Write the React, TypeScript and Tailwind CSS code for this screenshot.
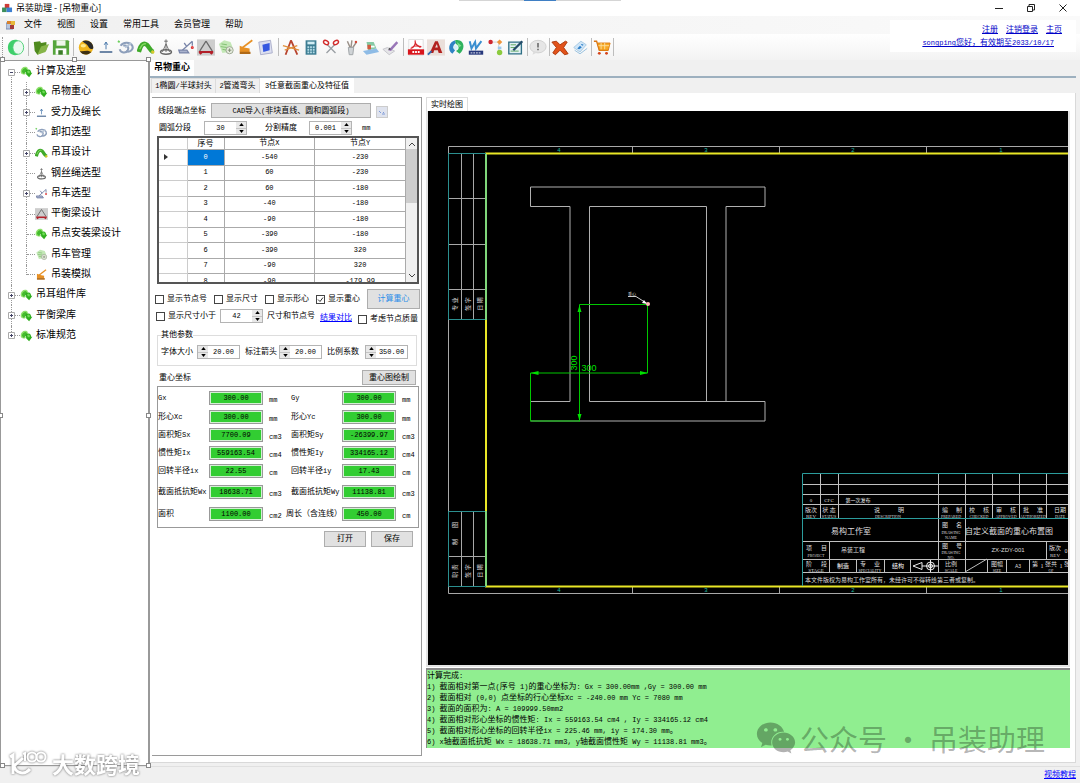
import { ReactNode, useState } from "react";
import { FaWeixin } from "react-icons/fa";

type IconName = keyof typeof icons;

const leaf = (
  <g>
    <path d="M1 9c0-5 3-8 7-8 2 0 4 1 4 3v5H8v4C4 13 1 12 1 9z" fill="#8fe06c" />
    <path d="M3 9c0-4 3-6 6-6l2 2-5 7z" fill="#45bb2e" />
    <path d="M8 9c0-3 2-4 5-4s4 2 4 5h2l-5 7-6-6h2z" fill="#2fae1e" />
    <path d="M11 8c1-2 3-2 4 0v3h-3z" fill="#6fdc55" />
  </g>
);

const icons = {
  ring: (
    <g>
      <path d="M12 1C6-1 1 3 1 9s5 10 11 8z" fill="#3fcf6b" />
      <ellipse cx="12.500" cy="9" rx="6" ry="7.500" fill="#e9faef" stroke="#49cf73" />
    </g>
  ),
  folder: (
    <g>
      <path d="M2 3l7-1 1 2 6-1v9L6 17 3 13z" fill="#4f8a1e" />
      <path d="M6 17l4-9 9-3-4 9z" fill="#86b548" />
    </g>
  ),
  save: (
    <g>
      <path d="M1 1h17l1 1v15H1z" fill="#56a63c" />
      <path d="M5 1h10v6H5z" fill="#eef7ea" />
      <path d="M4 10h12v7H4z" fill="#fff" />
      <path d="M7 12h5v5H7z" fill="#3b7d28" />
    </g>
  ),
  ball: (
    <g>
      <circle cx="10" cy="9" r="8" fill="#f0b51c" />
      <path d="M6 2c6-3 13 2 12 8-3 2-5-1-6-3S8 4 6 2z" fill="#2a2a2a" />
      <path d="M3 13c4 1 7-1 10 0 2 1 3 1 3 1-4 4-10 4-13-1z" fill="#3d2f12" />
      <ellipse cx="7" cy="7" rx="3" ry="2" fill="#ffe98a" />
    </g>
  ),
  force: (
    <g stroke="#6d86a6" fill="none">
      <path d="M10 3v8M8 6l2-3 2 3" stroke="#3b6ea5" />
      <path d="M3 14h14" strokeWidth="2.2" />
    </g>
  ),
  shackle: (
    <g fill="none" stroke="#8d9fbb" strokeWidth="2.2">
      <path d="M4 7c3-5 11-4 13 0s-3 8-7 6" />
      <path d="M3 11c1 4 7 5 9 1s-2-6-5-5" />
      <path d="M9 9l7-5" stroke="#b4c3d6" />
      <path d="M1 2l2 1" stroke="#6ccf5b" />
    </g>
  ),
  lug: (
    <g fill="none">
      <path d="M2 14C4 6 7 3 11 6c3 3 3 6 7 8" stroke="#3faa2a" strokeWidth="5" />
      <path d="M3 11C5 6 7 4 10 5" stroke="#86da63" strokeWidth="1.500" />
      <path d="M16 13l3 2" stroke="#d7c92c" strokeWidth="3" />
    </g>
  ),
  rope: (
    <g fill="none" stroke="#666">
      <path d="M10 0v5M8 2h4M10 5L6 14M10 5l4 9M10 5v9" />
      <ellipse cx="10" cy="14" rx="6" ry="2.500" strokeWidth="1.800" />
    </g>
  ),
  crane: (
    <g fill="none" stroke="#7884a8" strokeWidth="1.400">
      <path d="M6 12L17 2M11 8l-3-4M17 2v5" />
      <path d="M2 12h9l2 3H3z" fill="#a9b2cd" />
      <circle cx="17" cy="9" r="1" stroke="#d33" />
    </g>
  ),
  beam: (
    <g>
      <path d="M0 0h20v18H0z" fill="#cdcdcd" />
      <path d="M10 2L3 13M10 2l7 11" stroke="#6a6a6a" fill="none" strokeWidth="1.400" />
      <path d="M2 13h16v2l-2 2-2-2H6l-2 2-2-2z" fill="#b3202a" />
    </g>
  ),
  manage: (
    <g>
      <path d="M2 5l6-4 7 2 2 5-4 6-7 1z" fill="#c3e8b6" />
      <path d="M5 5l6 1M4 8l7 1M6 11l5 1" stroke="#7dbb6c" />
      <circle cx="14" cy="12" r="4" fill="#e7ecdf" stroke="#98a58e" />
      <path d="M12 12h4M14 10v4" stroke="#7a8a6e" />
    </g>
  ),
  excavator: (
    <g>
      <path d="M5 10L17 1" stroke="#e79024" strokeWidth="2" />
      <path d="M3 7l5 2 6 1v4H3z" fill="#e79024" />
      <path d="M3 15h12" stroke="#b06a18" strokeWidth="2.500" />
    </g>
  ),
  screen: (
    <g>
      <path d="M2 3l13-2 2 14-13 2z" fill="#dcdff0" stroke="#a8abc8" />
      <path d="M6 6l8-2v8l-7 2z" fill="#3557e0" />
    </g>
  ),
  compass: (
    <g fill="none" strokeWidth="2">
      <path d="M10 1L4 17M10 1l7 16" stroke="#b8442f" />
      <path d="M1 7l18 5M3 12l14-5" stroke="#e0903c" strokeWidth="1.500" />
    </g>
  ),
  calculator: (
    <g>
      <path d="M4 1h12v16H4z" fill="#3d7d93" />
      <path d="M6 2.500h8v3H6z" fill="#d2edf4" />
      <path d="M6 8.500h8M6 11.500h8M6 14.500h8" stroke="#b3dbe6" strokeDasharray="2 1" strokeWidth="2" />
    </g>
  ),
  scissors: (
    <g fill="none">
      <path d="M6 6l9 9M14 6l-9 9" stroke="#9a9fa4" strokeWidth="1.500" />
      <ellipse cx="4.500" cy="3.500" rx="3" ry="2" stroke="#d22b2b" strokeWidth="1.600" transform="rotate(30 4.500 3.500)" />
      <ellipse cx="15.500" cy="3.500" rx="3" ry="2" stroke="#d22b2b" strokeWidth="1.600" transform="rotate(-30 15.500 3.500)" />
    </g>
  ),
  brushes: (
    <g>
      <path d="M6 2l3 7M11 1l-1 8M16 3l-4 6" stroke="#9a9088" strokeWidth="1.600" />
      <path d="M7 9h6l-1 8H8z" fill="#d0d4d7" stroke="#9b9fa3" />
      <circle cx="15.500" cy="3" r="1.400" fill="#d24a3b" />
    </g>
  ),
  report: (
    <g>
      <path d="M5 3h8l3 7-9 2z" fill="#86c9a4" />
      <path d="M1 13l15-3 3 4-14 3z" fill="#8fbce6" />
      <path d="M6 6h4v5H6z" fill="#d35b3f" />
      <path d="M10 7h4v2h-4z" fill="#fff" />
    </g>
  ),
  pen: (
    <g>
      <path d="M1 11l5-2 8 4-6 4z" fill="#e5e5e8" stroke="#c3c3c8" />
      <path d="M7 12l9-10 2 2-8 9z" fill="#9a77b8" />
      <path d="M7 12l1-3 2 2z" fill="#555" />
    </g>
  ),
  pdf: (
    <g>
      <path d="M2 0h16v18H2z" fill="#fff" stroke="#ddd" />
      <path d="M9 1c1 4-1 8-5 9M9 2c0 4 4 6 7 6M5 9c3-2 7-2 10 0" stroke="#d8252b" fill="none" strokeWidth="1.300" />
      <path d="M1 11h18v6H1z" fill="#d8151c" />
      <path d="M6 14h8" stroke="#fff" strokeDasharray="2 1" strokeWidth="2" />
    </g>
  ),
  autocad: (
    <g>
      <path d="M0 0h20v18H0z" fill="#eadfda" />
      <path d="M3 15L9 2h3l5 13h-4l-1-3H8l-1 3zM9 9h3l-1-4z" fill="#b3211e" fillRule="evenodd" />
      <path d="M1 17l4-4" stroke="#2c6bb3" strokeWidth="2" />
    </g>
  ),
  globe: (
    <g>
      <path d="M9 1C2 3 0 12 6 16l3-4c-3-3-2-6 1-8z" fill="#2f83c4" />
      <path d="M9 1c9-2 13 8 5 15l-4-3c4-2 4-6 0-8z" fill="#2fb25e" />
      <path d="M11 3l5 4-3 2z" fill="#7ee08e" />
      <circle cx="9.500" cy="9" r="2.500" fill="#d8f0f6" />
    </g>
  ),
  word: (
    <g>
      <path d="M3 2l2 8 4-7 1 7 6-8" fill="none" stroke="#3a8fd0" strokeWidth="2.200" />
      <path d="M2 12.500h16v4.500H2z" fill="#27387c" />
      <path d="M4 15h12" stroke="#fff" strokeDasharray="2 1" />
    </g>
  ),
  nodes: (
    <g>
      <path d="M5 3h10M13 3v11" stroke="#ccc" />
      <circle cx="4" cy="3" r="2.500" fill="#cf2630" />
      <path d="M14 0l3 3-3 3-3-3z" fill="#f0963c" />
      <path d="M12 8h4v3h-4z" fill="#9ac9ef" />
      <circle cx="14" cy="14.500" r="3" fill="#8ccb3f" />
    </g>
  ),
  edit: (
    <g>
      <path d="M2 3h14v13H2z" fill="#e2f1f4" stroke="#2f6f86" strokeWidth="1.500" />
      <path d="M4 6h6M4 9h5M4 13h9" stroke="#58a55a" />
      <path d="M7 12l10-10" stroke="#244b68" strokeWidth="2.500" />
    </g>
  ),
  notice: (
    <g>
      <ellipse cx="10" cy="8" rx="9" ry="7" fill="#e6e6e6" stroke="#cfcfcf" />
      <path d="M5 13l-1 4 6-3z" fill="#dcdcdc" />
      <path d="M10 4v5M10 10.500v1.500" stroke="#555" strokeWidth="1.500" />
    </g>
  ),
  close: (
    <path d="M1 3l5-1 4 4 6-4 2 1-4 6 5 7-4 1-5-5-5 5-3-2 4-6z" fill="#e2531b" stroke="#a83709" />
  ),
  cards: (
    <g>
      <path d="M3 9l8-7 6 4-7 8z" fill="#cfe5f7" stroke="#a5c8e2" />
      <path d="M4 12l6 4 8-6" fill="none" stroke="#8dbbdd" />
      <path d="M7 10l3-3 2 2-3 2zM12 5l2 1-1 1-2-1z" fill="#2d7fc8" />
    </g>
  ),
  cart: (
    <g>
      <path d="M1 2h3l3 10h10" fill="none" stroke="#d97514" strokeWidth="1.500" />
      <path d="M5 4h14l-2 8H7z" fill="#f7a823" stroke="#dc7c12" />
      <path d="M9 4v7M13 4v7M6 7h12" stroke="#fce0a0" />
      <circle cx="7" cy="15.500" r="1.600" fill="#d4421a" />
      <circle cx="15" cy="15.500" r="1.600" fill="#d4421a" />
    </g>
  ),
  leaf,
};

const Icon = ({ name, className }: { name: IconName; className: string }) => (
  <svg viewBox="0 0 20 18" className={className} aria-hidden="true">
    {icons[name]}
  </svg>
);

// Latin runs are set one size smaller so they keep half the width of a Han character.
const Mixed = ({ children }: { children: string }) => (
  <span className="whitespace-pre">
    {children.split(/([\x20-\x7e]+)/).map((part, i) =>
      i % 2 ? (
        <span key={i} className="text-[7px]">
          {part}
        </span>
      ) : (
        part
      )
    )}
  </span>
);

const menus = ["文件", "视图", "设置", "常用工具", "会员管理", "帮助"];

const tools: (IconName | "sep" | "thin")[] = [
  "ring", "sep", "folder", "save", "sep",
  "ball", "force", "shackle", "lug", "rope", "crane", "beam", "manage", "excavator", "screen", "sep",
  "compass", "calculator", "scissors", "brushes", "report", "pen", "sep",
  "pdf", "autocad", "globe", "word", "nodes", "edit", "thin",
  "notice", "thin", "close", "cards", "thin", "cart", "thin",
];

type TreeItem = { label: string; icon: IconName; level: 0 | 1; box?: "+" | "-" };

const tree: TreeItem[] = [
  { label: "计算及选型", icon: "leaf", level: 0, box: "-" },
  { label: "吊物重心", icon: "leaf", level: 1, box: "+" },
  { label: "受力及绳长", icon: "force", level: 1, box: "+" },
  { label: "卸扣选型", icon: "shackle", level: 1 },
  { label: "吊耳设计", icon: "lug", level: 1, box: "+" },
  { label: "钢丝绳选型", icon: "rope", level: 1 },
  { label: "吊车选型", icon: "crane", level: 1, box: "+" },
  { label: "平衡梁设计", icon: "beam", level: 1 },
  { label: "吊点安装梁设计", icon: "leaf", level: 1 },
  { label: "吊车管理", icon: "manage", level: 1 },
  { label: "吊装模拟", icon: "excavator", level: 1 },
  { label: "吊耳组件库", icon: "leaf", level: 0, box: "+" },
  { label: "平衡梁库", icon: "leaf", level: 0, box: "+" },
  { label: "标准规范", icon: "leaf", level: 0, box: "+" },
];

const nodes = [
  ["0", "-540", "-230"],
  ["1", "60", "-230"],
  ["2", "60", "-180"],
  ["3", "-40", "-180"],
  ["4", "-90", "-180"],
  ["5", "-390", "-180"],
  ["6", "-390", "320"],
  ["7", "-90", "320"],
  ["8", "-90", "-179.99"],
];

const results = [
  ["Gx", "300.00", "mm", "Gy", "300.00", "mm"],
  ["形心Xc", "300.00", "mm", "形心Yc", "300.00", "mm"],
  ["面积矩Sx", "7700.09", "cm3", "面积矩Sy", "-26399.97", "cm3"],
  ["惯性矩Ix", "559163.54", "cm4", "惯性矩Iy", "334165.12", "cm4"],
  ["回转半径ix", "22.55", "cm", "回转半径iy", "17.43", "cm"],
  ["截面抵抗矩Wx", "18638.71", "cm3", "截面抵抗矩Wy", "11138.81", "cm3"],
  ["面积", "1100.00", "cm2", "周长（含连线）", "450.00", "cm"],
];

const log = [
  "计算完成:",
  "1) 截面相对第一点(序号 1)的重心坐标为: Gx = 300.00mm ,Gy = 300.00 mm",
  "2) 截面相对 (0,0) 点坐标的行心坐标Xc = -240.00 mm Yc = 7080 mm",
  "3) 截面的面积为: A = 109999.50mm2",
  "4) 截面相对形心坐标的惯性矩: Ix = 559163.54 cm4 , Iy = 334165.12 cm4",
  "5) 截面相对形心坐标的回转半径ix = 225.46 mm, iy = 174.30 mm。",
  "6) x轴截面抵抗矩 Wx = 18638.71 mm3, y轴截面惯性矩 Wy = 11138.81 mm3。",
];

const Button = ({ className, children }: { className: string; children: ReactNode }) => (
  <button
    type="button"
    className={`flex shrink-0 items-center justify-center whitespace-nowrap border border-[#adadad] bg-[#e1e1e1] ${className}`}
  >
    {children}
  </button>
);

const Spinner = ({ label, value, left }: { label: string; value: string; left?: boolean }) => (
  <div className={`flex h-[14px] w-[43px] shrink-0 border border-[#b4b4b4] bg-white ${left ? "flex-row-reverse" : ""}`}>
    <input
      aria-label={label}
      defaultValue={value}
      className="w-0 min-w-0 flex-1 bg-transparent text-center text-[7px] outline-none"
    />
    <div className="flex w-[10px] flex-col bg-[#e8e8e8]">
      <button type="button" aria-label={`${label}+`} className="flex flex-1 items-center justify-center">
        <svg viewBox="0 0 6 4" className="h-[3px] w-[5px]"><path d="M3 0l3 4H0z" /></svg>
      </button>
      <button type="button" aria-label={`${label}-`} className="flex flex-1 items-center justify-center border-t border-[#c4c4c4]">
        <svg viewBox="0 0 6 4" className="h-[3px] w-[5px]"><path d="M3 4l3-4H0z" /></svg>
      </button>
    </div>
  </div>
);

const Check = ({ label, checked }: { label: string; checked?: boolean }) => {
  const [on, setOn] = useState(!!checked);
  return (
    <label className="flex items-center gap-[3px] whitespace-nowrap">
      <span className="grid size-[9px]">
        <input
          type="checkbox"
          checked={on}
          onChange={() => setOn(!on)}
          className="col-start-1 row-start-1 size-[9px] appearance-none border border-[#444] bg-white"
        />
        {on && (
          <svg viewBox="0 0 9 9" className="pointer-events-none col-start-1 row-start-1 size-[9px]">
            <path d="M2 4.500l2 2 3-4" fill="none" stroke="#333" />
          </svg>
        )}
      </span>
      {label}
    </label>
  );
};

const TreeRow = ({ item, isLast }: { item: TreeItem; isLast: boolean }) => (
  <li className="relative flex items-center">
    <span className={`absolute left-[10px] border-l border-dotted border-[#999] ${item.box === "-" ? "top-1/2 h-1/2" : isLast ? "top-0 h-1/2" : "inset-y-0"}`} />
    {item.level === 1 && (
      <span className={`absolute left-[25px] top-0 border-l border-dotted border-[#999] ${item.icon === "excavator" ? "h-1/2" : "h-full"}`} />
    )}
    <span className={`relative flex h-[7px] shrink-0 items-center ${item.level ? "ml-[22px] w-[12px]" : "ml-[7px] w-[12px]"}`}>
      {item.box ? (
        <svg viewBox="0 0 7 7" className="size-[7px] shrink-0">
          <path d="M.5.5h6v6h-6z" fill="#fff" stroke="#aaa" />
          <path d={item.box === "+" ? "M2 3.500h3M3.500 2v3" : "M2 3.500h3"} stroke="#446" />
        </svg>
      ) : (
        <span className="w-1 shrink-0" />
      )}
      <span className="w-full border-t border-dotted border-[#999]" />
    </span>
    <Icon name={item.icon} className="h-[12px] w-[13px] shrink-0" />
    <a href="#" className="ml-[3px] whitespace-nowrap text-[10px] leading-4">
      {item.label}
    </a>
  </li>
);

const Handle = ({ className }: { className: string }) => (
  <span className={`absolute size-[5px] border border-[#888] bg-white ${className}`} />
);

const CadText = ({ x, y, size = 6, rotate, fill = "#ddd", children }: {
  x: number; y: number; size?: number; rotate?: boolean; fill?: string; children: string;
}) => (
  <text x={x} y={y} fontSize={size} fill={fill} textAnchor="middle" dominantBaseline="central"
    transform={rotate ? `rotate(-90 ${x} ${y})` : undefined}>
    {children}
  </text>
);

const zones: [number, string][] = [[559, "4"], [706, "3"], [853, "2"], [1001, "1"]];

const Drawing = () => (
  <svg
    viewBox="428 111 640 554"
    preserveAspectRatio="xMinYMin slice"
    className="h-[554px] w-full bg-black font-['Liberation_Serif','Noto_Sans_CJK_SC',serif]"
    role="img"
    aria-label="实时绘图"
    fill="none"
  >
    <g stroke="#a8a8a8">
      <path d="M1080 146.500H448.500v447H1080" />
      <path d="M632.500 146v7M779.500 146v7M926.500 146v7M632.500 587v6M779.500 587v6M926.500 587v6" />
      <path d="M461.500 154v166M473.500 154v166M448 198.500h38M448 244.500h38M448 289.500h38" />
      <path d="M461.500 511v75M473.500 511v75M448 556.500h38" />
    </g>
    <path d="M1080 153.500H486V586.500H1080" stroke="#e8e626" strokeWidth="2" />
    <path d="M486 153.500h-37.500v166H486M486 511.500h-37.500v75H486" stroke="#2b8f8f" />
    <path d="M486 154v166M486 511v75" stroke="#7fd67a" strokeWidth="2" />
    <g className="font-['Liberation_Sans',sans-serif]">
      {zones.map(([x, n]) => (
        <g key={n}>
          <CadText x={x} y={150} size={6} fill="#1fb8a0">{n}</CadText>
          <CadText x={x} y={590} size={6} fill="#1fb8a0">{n}</CadText>
        </g>
      ))}
    </g>

    <path
      d="M530.500 206.500v-19.500H765v19.500H726V401.500M530.500 206.500H570V401.500H530.500V421H765v-19.500H589.500v-195H706.500v195"
      stroke="#b0b0b0"
    />
    <path d="M648 304.500H579.500V421M647.500 304v69H530.500v48H580" stroke="#00c800" />
    <path d="M579.500 305l2 7h-4zM579.500 421l2-7h-4zM530.500 373l8-2v4zM648 373l-8-2v4z" fill="#00e000" />
    <g className="font-['Liberation_Sans',sans-serif]">
      <CadText x={589} y={368} size={9} fill="#00e000">300</CadText>
      <CadText x={574} y={363} size={9} rotate fill="#00e000">300</CadText>
    </g>
    <path d="M628 296.500h8l11 7" stroke="#ccc" />
    <CadText x={632} y={294} size={4}>重心</CadText>
    <path d="M647 304l-5-1 2-3z" fill="#fff" />
    <circle cx="648" cy="304" r="2" fill="#ffb8b8" />

    <CadText x={455} y={304} rotate>专 业</CadText>
    <CadText x={468} y={304} rotate>签 字</CadText>
    <CadText x={480} y={304} rotate>日 期</CadText>
    <CadText x={455} y={542} rotate>制</CadText>
    <CadText x={455} y={525} rotate>图</CadText>
    <CadText x={455} y={571} rotate>职 责</CadText>
    <CadText x={468} y={571} rotate>签 字</CadText>
    <CadText x={480} y={571} rotate>日 期</CadText>

    <g stroke="#c0c0c0">
      <path d="M802 484.500h278M802 494.500h278M802 504.500h278M802 541.500h278M802 559.500h278M802 572.500h278" />
      <path d="M820.500 473v45M838.500 473v45M938.500 473v99M965.500 473v99M992.500 473v45M1019.500 473v45M1046.500 473v45" />
      <path d="M829.500 541v31M856.500 559v13M884.500 559v13M910.500 559v13M987.500 559v13M1006.500 559v13M1029.500 559v13M1046.500 541v18M965 572l22-13" />
    </g>
    <g stroke="#eee">
      <path d="M913 566l9-3.500v7zM922 566h16M930.500 560v12" />
      <circle cx="930.500" cy="566" r="4" />
      <circle cx="930.500" cy="566" r="2" />
    </g>
    <path d="M1080 473.500H802.500V586M802 518.500h278" stroke="#2b9c9c" />
    <CadText x={811} y={500} size={5}>0</CadText>
    <CadText x={829} y={500} size={5}>CFC</CadText>
    <CadText x={858} y={500} size={5} fill="#fff">第一次发布</CadText>
    <CadText x={811} y={510}>版次</CadText>
    <CadText x={811} y={516} size={5}>REV</CadText>
    <CadText x={829} y={510}>状 态</CadText>
    <CadText x={829} y={516} size={4}>STATUS</CadText>
    <CadText x={877} y={510}>说</CadText>
    <CadText x={901} y={510}>明</CadText>
    <CadText x={888} y={516} size={4}>DESCRIPTION</CadText>
    <CadText x={945} y={510}>编</CadText>
    <CadText x={959} y={510}>制</CadText>
    <CadText x={951} y={516} size={4}>PREPARED</CadText>
    <CadText x={972} y={510}>校</CadText>
    <CadText x={986} y={510}>核</CadText>
    <CadText x={979} y={516} size={4}>CHECKED</CadText>
    <CadText x={999} y={510}>审</CadText>
    <CadText x={1013} y={510}>核</CadText>
    <CadText x={1006} y={516} size={4}>APPROVED</CadText>
    <CadText x={1026} y={510}>批</CadText>
    <CadText x={1040} y={510}>准</CadText>
    <CadText x={1033} y={516} size={4}>AUTHORIZED</CadText>
    <CadText x={1060} y={510}>日期</CadText>
    <CadText x={1060} y={516} size={4}>DATE</CadText>
    <CadText x={851} y={531} size={8}>易构工作室</CadText>
    <CadText x={945} y={525}>图</CadText>
    <CadText x={959} y={525}>名</CadText>
    <CadText x={951} y={532} size={4}>DRAWING</CadText>
    <CadText x={951} y={537} size={4}>NAME</CadText>
    <CadText x={1009} y={531} size={8}>自定义截面的重心布置图</CadText>
    <CadText x={809} y={548}>项</CadText>
    <CadText x={824} y={548}>目</CadText>
    <CadText x={816} y={555} size={4}>PROJECT</CadText>
    <CadText x={853} y={550}>吊装工程</CadText>
    <CadText x={945} y={546}>图</CadText>
    <CadText x={959} y={546}>号</CadText>
    <CadText x={951} y={552} size={4}>DRAWING</CadText>
    <CadText x={951} y={557} size={4}>NO.</CadText>
    <g className="font-['Liberation_Sans',sans-serif]">
      <CadText x={1008} y={550}>ZX-ZDY-001</CadText>
      <CadText x={1018} y={566} size={5}>A3</CadText>
    </g>
    <CadText x={1055} y={548}>版次</CadText>
    <CadText x={1055} y={555} size={5}>REV</CadText>
    <CadText x={1066} y={551}>0</CadText>
    <CadText x={809} y={564}>阶</CadText>
    <CadText x={824} y={564}>段</CadText>
    <CadText x={816} y={570} size={5}>STAGE</CadText>
    <CadText x={843} y={566} fill="#fff">制造</CadText>
    <CadText x={863} y={564}>专</CadText>
    <CadText x={877} y={564}>业</CadText>
    <CadText x={870} y={570} size={4}>SPECIALITY</CadText>
    <CadText x={898} y={566} fill="#fff">结构</CadText>
    <CadText x={951} y={564}>比例</CadText>
    <CadText x={951} y={570} size={4}>SCALE</CadText>
    <CadText x={997} y={564}>图幅</CadText>
    <CadText x={997} y={570} size={4}>SIZE</CadText>
    <CadText x={1035} y={564}>第</CadText>
    <CadText x={1042} y={566}>1</CadText>
    <CadText x={1051} y={564}>张共</CadText>
    <CadText x={1051} y={570} size={4}>OF</CadText>
    <CadText x={1061} y={566}>1</CadText>
    <CadText x={1067} y={564}>张</CadText>
    <CadText x={892} y={580}>本文件版权为易构工作室所有，未经许可不得转给第三者或复制。</CadText>
  </svg>
);

const NodeTable = () => (
  <div className="mt-px flex h-[148px] w-[262px] overflow-hidden border-2 border-[#555] bg-white">
    <div className="flex-1 overflow-x-hidden overflow-y-auto [scrollbar-width:none]">
      <table className="w-full table-fixed border-collapse text-center leading-[9px]">
        <colgroup>
          <col className="w-[28px]" />
          <col className="w-[37px]" />
          <col />
          <col />
        </colgroup>
        <thead>
          <tr className="h-[11px]">
            <th className="border-b border-r border-[#ccc] p-0" />
            {["序号", "节点X", "节点Y"].map((h) => (
              <th key={h} scope="col" className="border-b border-r border-[#aaa] p-0 font-normal">
                <Mixed>{h}</Mixed>
              </th>
            ))}
          </tr>
        </thead>
        <tbody className="text-[7px]">
          {nodes.map(([id, x, y], i) => (
            <tr key={id} className="odd:h-4 even:h-[15px]">
              <td className="border-b border-r border-[#ccc] p-0">
                {i === 0 && (
                  <svg viewBox="0 0 4 6" className="ml-[5px] h-[6px] w-1"><path d="M0 0l4 3-4 3z" fill="#333" /></svg>
                )}
              </td>
              <td className={`border-b border-r border-[#aaa] p-0 ${i === 0 ? "bg-[#0078d7] text-white" : ""}`}>{id}</td>
              <td className="border-b border-r border-[#aaa] p-0">{x}</td>
              <td className="border-b border-r border-[#aaa] p-0">{y}</td>
            </tr>
          ))}
        </tbody>
      </table>
    </div>
    <div className="flex w-[11px] flex-col items-center bg-[#f0f0f0] py-1">
      <svg viewBox="0 0 6 4" className="h-1 w-[6px] shrink-0"><path d="M0 4l3-3 3 3" fill="none" stroke="#444" /></svg>
      <div className="mt-[3px] h-[54px] w-full bg-[#cdcdcd]" />
      <svg viewBox="0 0 6 4" className="mt-auto h-1 w-[6px] shrink-0"><path d="M0 0l3 3 3-3" fill="none" stroke="#444" /></svg>
    </div>
  </div>
);

const ResultCell = ({ label, value, unit }: { label: string; value: string; unit: string }) => (
  <label className="flex min-w-0 items-center">
    <span className={`flex w-[51px] shrink-0 ${label.length > 6 && unit === "cm" ? "justify-end" : ""}`}>
      <Mixed>{label}</Mixed>
    </span>
    <input
      readOnly
      value={value}
      className="h-[14px] w-[54px] shrink-0 border border-[#999] bg-[#32cd32] text-center text-[7px] leading-none outline-1 -outline-offset-2 outline-[#d4f0d4]"
    />
    <span className="ml-[6px] pt-[3px] text-[7px]">{unit}</span>
  </label>
);

const FormPanel = () => (
  <form className="mb-[6px] mt-1 w-[270px] shrink-0 border-y border-r border-[#9a9a9a] pl-[5px] pt-[5px]">
    <div className="flex h-[15px] items-center">
      <span className="w-[54px] pl-px">线段端点坐标</span>
      <Button className="h-[15px] w-[160px]">
        <Mixed>CAD导入(非块直线、圆和圆弧段)</Mixed>
      </Button>
      <button type="button" aria-label="预览" className="ml-[5px] mt-[2px] flex size-[12px] items-center justify-center border border-[#ccc] bg-[#dfe3ee]">
        <svg viewBox="0 0 8 8" className="size-2"><path d="M1 3l2 2M4 6h3M5 4l1 1" fill="none" stroke="#7f9bd8" /></svg>
      </button>
    </div>
    <div className="mt-[3px] flex h-[14px] items-center">
      <span className="w-[47px] pl-[2px]">圆弧分段</span>
      <Spinner label="圆弧分段" value="30" />
      <span className="ml-[18px] w-[44px]">分割精度</span>
      <Spinner label="分割精度" value="0.001" />
      <span className="ml-[10px] text-[7px]">mm</span>
    </div>
    <NodeTable />
    <div className="-ml-[2px] mt-[5px] flex h-5 items-center gap-[7px]">
      <Check label="显示节点号" />
      <Check label="显示尺寸" />
      <Check label="显示形心" />
      <Check label="显示重心" checked />
      <Button className="h-5 w-[53px] text-[#2e8fe8]">计算重心</Button>
    </div>
    <div className="-ml-px flex h-[14px] items-center gap-[4px]">
      <Check label="显示尺寸小于" />
      <Spinner label="显示尺寸小于" value="42" />
      <span>尺寸和节点号</span>
      <a href="#" className="ml-px mt-[3px] text-[#00f] underline">结果对比</a>
      <div className="ml-[2px] mt-[6px]">
        <Check label="考虑节点质量" />
      </div>
    </div>
    <fieldset className="mt-[7px] h-[36px] w-[260px] border border-[#ddd] px-[3px]">
      <legend className="leading-[10px]">其他参数</legend>
      <div className="flex items-center pt-[5px]">
        <span className="w-9">字体大小</span>
        <Spinner label="字体大小" value="20.00" left />
        <span className="ml-[5px] w-[34px]">标注箭头</span>
        <Spinner label="标注箭头" value="20.00" left />
        <span className="ml-[5px] w-[38px]">比例系数</span>
        <Spinner label="比例系数" value="350.00" left />
      </div>
    </fieldset>
    <div className="mt-1 flex h-[15px] items-center justify-between pl-[2px] pr-[5px]">
      <span>重心坐标</span>
      <Button className="h-[15px] w-[54px]">重心图绘制</Button>
    </div>
    <div className="mt-px grid w-[262px] grid-cols-[133px_1fr] grid-rows-[20px_18px_18px_18px_18px_24px_20px] border border-[#999] pb-[3px] pt-px">
      {results.map(([a, av, au, b, bv, bu]) => [
        <ResultCell key={a} label={a} value={av} unit={au} />,
        <ResultCell key={b} label={b} value={bv} unit={bu} />,
      ])}
    </div>
    <div className="mt-[3px] flex justify-end gap-[5px] pr-2">
      <Button className="h-4 w-[42px]">打开</Button>
      <Button className="h-4 w-[42px]">保存</Button>
    </div>
  </form>
);

export default function App() {
  return (
    <div className="relative flex min-h-screen flex-col bg-[#f0f0f0] font-['Liberation_Mono','Noto_Sans_CJK_SC',monospace] text-[8px] leading-[10px] text-black">
      <header className="relative">
        <div className="flex h-4 items-center bg-white pl-[2px] font-['Noto_Sans_CJK_SC',sans-serif]">
          <svg viewBox="0 0 12 11" className="h-[10px] w-[11px]">
            <path d="M3 1h5v5H3z" fill="#cf3a35" />
            <path d="M0 5h5v5H0z" fill="#3d8f5b" />
            <path d="M5 5h6v5H5z" fill="#3d7fd0" />
          </svg>
          <h1 className="ml-[3px] text-[9px] leading-4">吊装助理 - [吊物重心]</h1>
          <div className="ml-auto flex items-center gap-6 pr-[13px]">
            <button type="button" aria-label="最小化"><svg viewBox="0 0 8 8" className="size-2"><path d="M0 4.500h8" stroke="#222" /></svg></button>
            <button type="button" aria-label="还原"><svg viewBox="0 0 8 8" className="size-2" fill="none" stroke="#222"><path d="M.5 2.500h5v5h-5zM2 2V.5h5.500V6H6" /></svg></button>
            <button type="button" aria-label="关闭"><svg viewBox="0 0 8 8" className="size-2"><path d="M.5.5l7 7M7.500.5l-7 7" stroke="#222" /></svg></button>
          </div>
        </div>
        <div className="absolute left-[459px] top-0 flex h-px w-[162px] justify-center bg-[#d5d5d5]">
          <span className="w-8 bg-[#3f7fc4]" />
        </div>
        <nav className="flex h-[18px] items-center bg-linear-to-r from-[#f0f0f0] to-[#fafafa] pl-[6px] text-[9px]">
          <svg viewBox="0 0 10 10" className="size-[10px]">
            <path d="M0 3h7v6H0z" fill="#b9c6dd" stroke="#7a8db3" />
            <path d="M1 1h4v3H1z" fill="#d9822b" />
            <path d="M5 1h4v4H5z" fill="#e7b93c" />
            <path d="M4 5h4v4H4z" fill="#a43b3b" />
          </svg>
          <div className="ml-2 flex gap-[15px]">
            {menus.map((m) => (
              <button key={m} type="button" className="leading-4">{m}</button>
            ))}
          </div>
        </nav>
        <div className="flex h-[26px] items-center bg-linear-to-b from-white to-[#f3f3f3] pl-[2px]">
          <span className="mr-[3px] h-5 border-l border-dotted border-[#999]" />
          {tools.map((t, i) =>
            t === "sep" || t === "thin" ? (
              <span key={i} className={`flex h-[18px] shrink-0 justify-center ${t === "sep" ? "w-[5px]" : "w-[2px]"}`}>
                <span className="w-px bg-[#bdbdbd]" />
              </span>
            ) : (
              <button key={i} type="button" aria-label={t} className="w-5 shrink-0 px-px">
                <Icon name={t} className="h-[17px] w-[18px]" />
              </button>
            )
          )}
        </div>
        <div className="absolute right-1 top-[20px] h-[32px] w-[186px] bg-white pt-[5px] text-right text-[#0000c8]">
          <div className="flex justify-end gap-2 pr-[14px] underline">
            <a href="#">注册</a>
            <a href="#">注销登录</a>
            <a href="#">主页</a>
          </div>
          <a href="#" className="mr-[22px] mt-[3px] inline-block underline">
            <Mixed>songping您好，有效期至2033/10/17</Mixed>
          </a>
        </div>
      </header>

      <main className="flex flex-1">
        <aside className="relative w-[150px] shrink-0 border-x border-t border-b border-[#999] border-r-2 bg-white pt-px">
          <ul className="grid h-[284px] auto-rows-fr">
            {tree.map((item, i) => (
              <TreeRow key={item.label} item={item} isLast={i === tree.length - 1} />
            ))}
          </ul>
          <Handle className="-left-px -top-1" />
          <Handle className="-top-1 left-[71px]" />
          <Handle className="-right-[3px] -top-1" />
          <Handle className="-left-[3px] top-1/2" />
          <Handle className="-right-[3px] top-1/2" />
          <Handle className="-bottom-[3px] -left-px" />
          <Handle className="-bottom-[3px] -right-[3px]" />
        </aside>

        <section className="flex min-w-0 flex-1 flex-col pr-1">
          <div className="flex h-[18px] border-b-2 border-[#9db0bf] text-[9px]">
            <button type="button" className="w-11 bg-white font-bold">吊物重心</button>
          </div>
          <div className="flex h-[15px] items-stretch pl-px">
            <button type="button" className="w-[65px] border border-b-0 border-[#dcdcdc]"><Mixed>1椭圆/半球封头</Mixed></button>
            <button type="button" className="w-11 border-r border-t border-[#dcdcdc]"><Mixed>2管道弯头</Mixed></button>
            <button type="button" className="w-[94px] bg-white"><Mixed>3任意截面重心及特征值</Mixed></button>
          </div>
          <div className="mb-[3px] flex flex-1 border-b border-r border-[#d9d9d9] bg-white pl-[2px]">
            <FormPanel />
            <div className="ml-1 flex min-w-0 flex-1 flex-col pr-[5px] pt-1">
              <div className="flex">
                <button type="button" className="h-[14px] w-[42px] border border-b-0 border-[#dcdcdc]">实时绘图</button>
              </div>
              <div className="border-x-2 border-b-2 border-[#e4e4e4]">
                <Drawing />
              </div>
              <div role="log" className="mt-px h-[80px] border-l border-t-2 border-[#8a8a8a] bg-[#90ee90] leading-[11px]">
                {log.map((line) => (
                  <p key={line} className="h-[11px]"><Mixed>{line}</Mixed></p>
                ))}
              </div>
            </div>
          </div>
        </section>
      </main>

      <footer className="flex h-[17px] items-center justify-end border-t border-[#e0e0e0] pr-1">
        <a href="#" className="text-[#00f] underline">视频教程</a>
      </footer>

      <div className="pointer-events-none absolute bottom-[25px] right-[35px] flex items-center font-['Noto_Sans_CJK_SC',sans-serif] text-[29px] leading-8 text-black/30">
        <FaWeixin className="mr-1 size-10" />
        <span className="whitespace-nowrap">公众号 · 吊装助理</span>
      </div>
      <div className="pointer-events-none absolute bottom-[6px] left-2 flex items-center gap-[4px] font-['Noto_Sans_CJK_SC',sans-serif] text-[22px] font-bold leading-7 text-white drop-shadow-[0_0_1px_#666]">
        <svg viewBox="0 0 40 28" className="h-7 w-10" fill="none" stroke="#fff" strokeWidth="3">
          <path d="M2 8l3-2v19M15 9L6 17c2 8 11 9 16 3" />
          <path d="M17 12V4l-2 1" strokeWidth="2" />
          <ellipse cx="24" cy="8" rx="4.500" ry="4.500" strokeWidth="2" />
          <ellipse cx="33" cy="8" rx="4.500" ry="4.500" strokeWidth="2" />
        </svg>
        <span>大数跨境</span>
      </div>
    </div>
  );
}
